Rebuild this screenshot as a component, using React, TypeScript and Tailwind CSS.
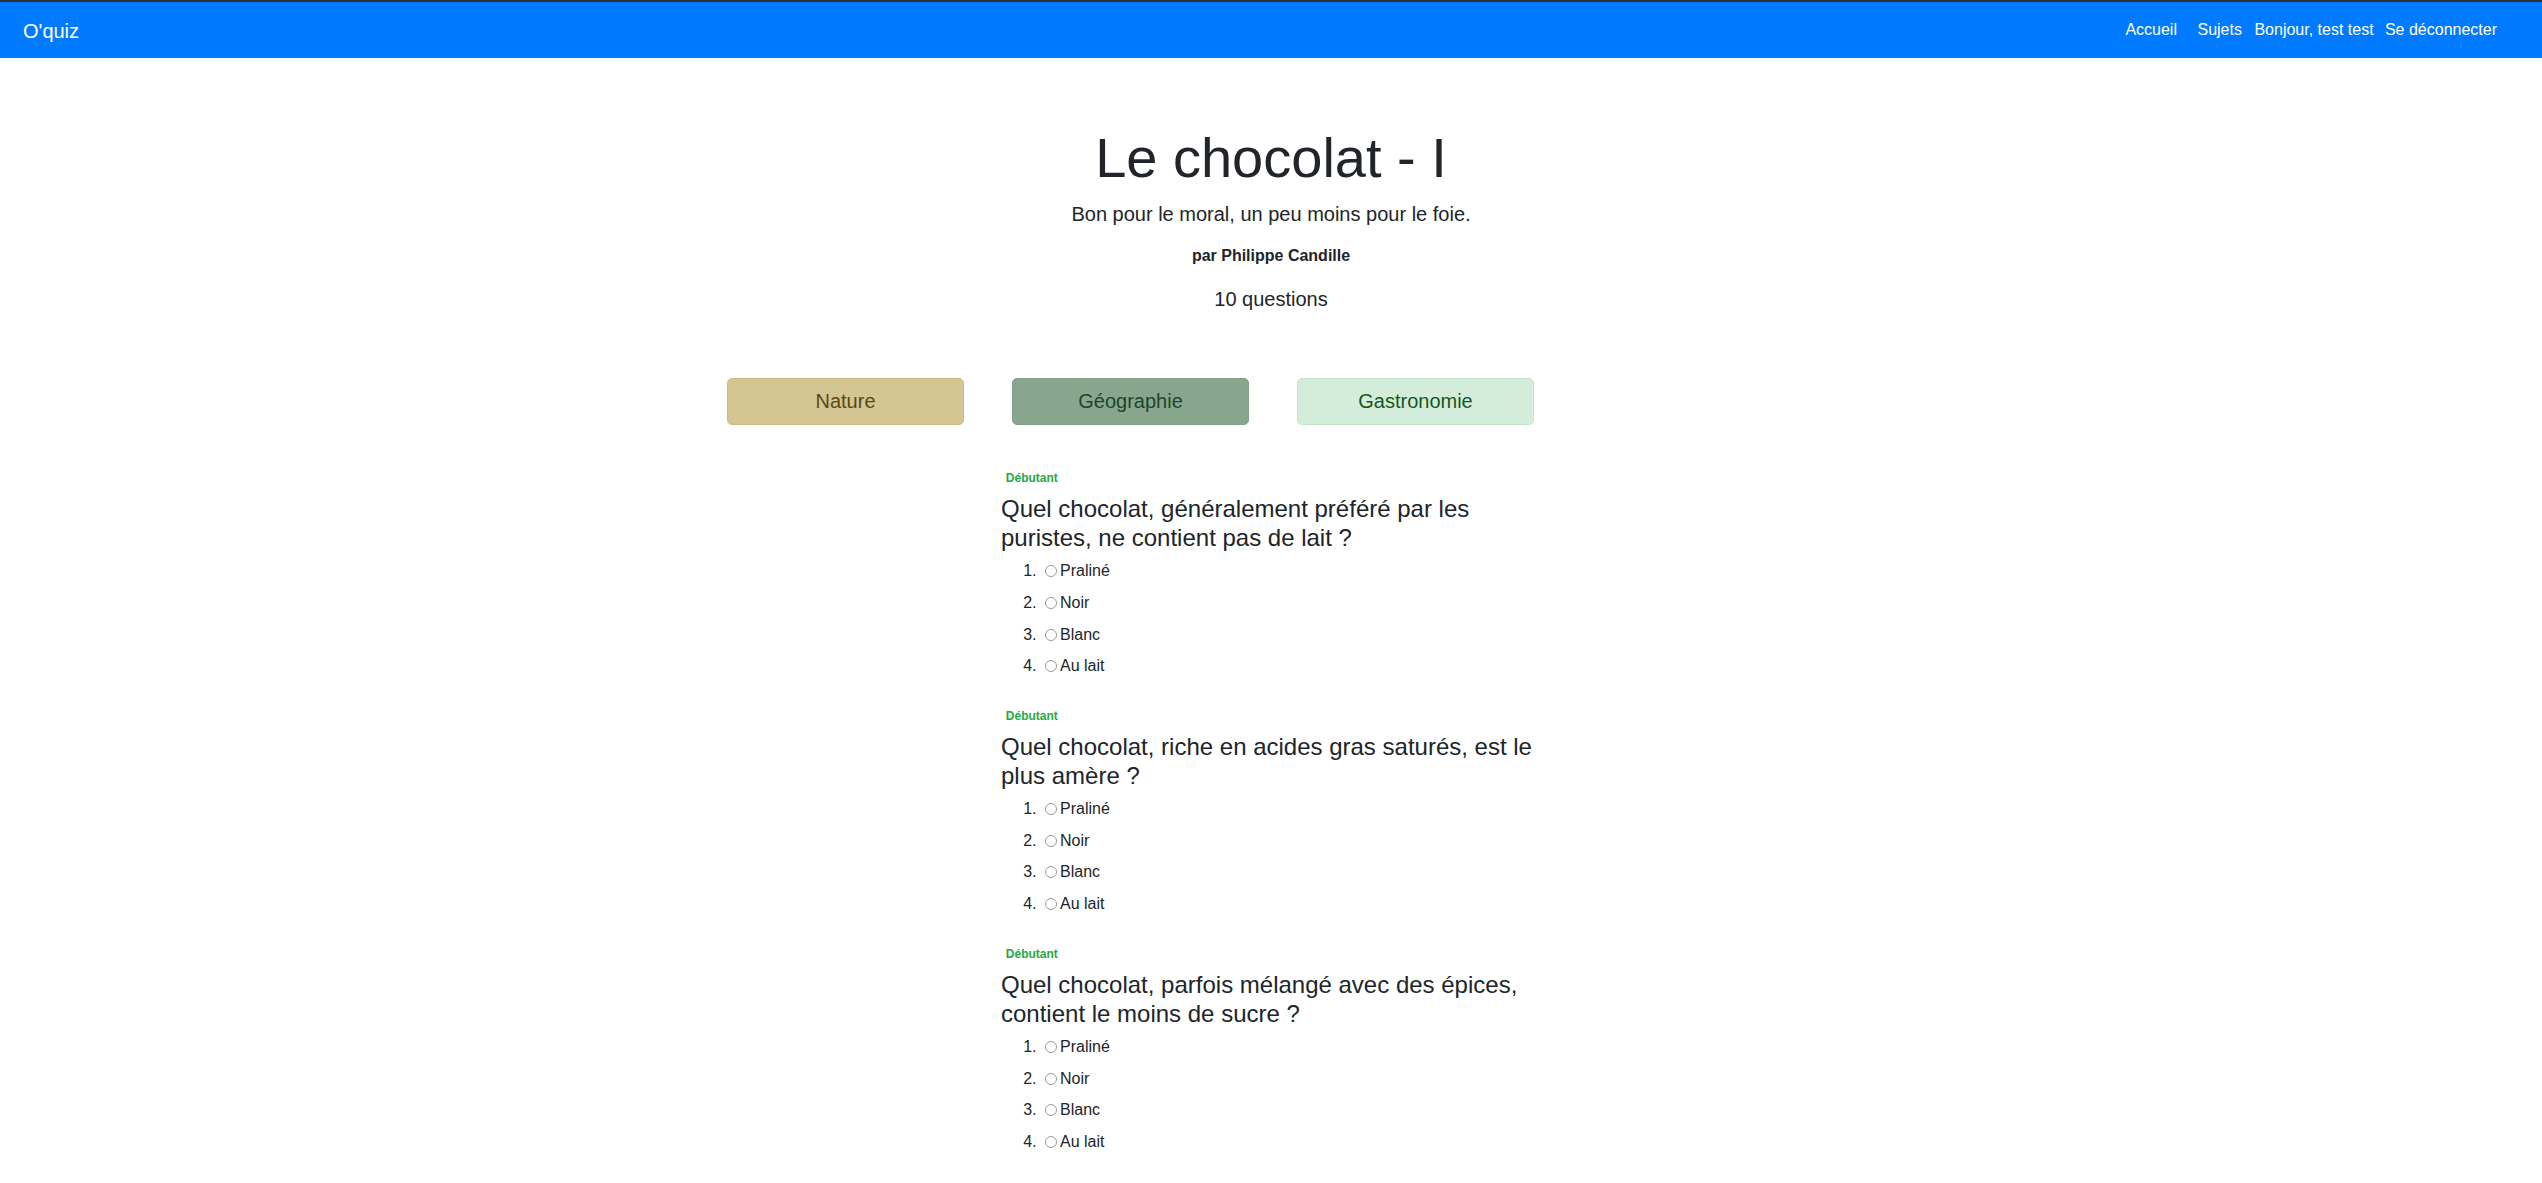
const questions = [
  {
    level: "Débutant",
    title: "Quel chocolat, généralement préféré par les puristes, ne contient pas de lait ?",
  },
  {
    level: "Débutant",
    title: "Quel chocolat, riche en acides gras saturés, est le plus amère ?",
  },
  {
    level: "Débutant",
    title: "Quel chocolat, parfois mélangé avec des épices, contient le moins de sucre ?",
  },
];

const answers = ["Praliné", "Noir", "Blanc", "Au lait"];

export default function App() {
  return (
    <div className="min-h-screen bg-white font-['Liberation_Sans',Arial,sans-serif] text-[#212529]">
      {/* Navbar */}
      <div className="h-[2px] bg-[#2d3036]" />
      <nav className="flex h-[56px] items-center bg-[#007bff] pl-[23px] pr-[45px] text-white shadow-[0_1px_2px_rgba(0,0,0,0.06)]">
        <span className="text-[20px] leading-[30px] pt-[2px]">O'quiz</span>
        <div className="ml-auto flex items-center text-[16px] leading-6">
          <span className="mr-[20.5px]">Accueil</span>
          <span className="mr-[12.5px]">Sujets</span>
          <span className="mr-[11.3px]">Bonjour, test test</span>
          <span>Se déconnecter</span>
        </div>
      </nav>

      {/* Header */}
      <header className="pt-[66px] text-center">
        <h1 className="text-[56px] leading-[1.2] font-light mb-[8px]">Le chocolat - I</h1>
        <p className="text-[20px] leading-[30px] mb-[15px]">
          Bon pour le moral, un peu moins pour le foie.
        </p>
        <p className="text-[16px] leading-6 font-bold mb-[16px]">par Philippe Candille</p>
        <p className="text-[20px] leading-[30px]">10 questions</p>
      </header>

      {/* Tags */}
      <div className="mx-auto mt-[63.6px] flex w-[1140px] gap-[48px] pl-[26px]">
        <div className="flex h-[47px] w-[237px] items-center justify-center rounded-[5px] border border-[#cbbb85] bg-[#d4c593] text-[20px] text-[#5b4812]">
          Nature
        </div>
        <div className="flex h-[47px] w-[237px] items-center justify-center rounded-[5px] border border-[#80a087] bg-[#88a68e] text-[20px] text-[#1d4729]">
          Géographie
        </div>
        <div className="flex h-[47px] w-[237px] items-center justify-center rounded-[5px] border border-[#c3e6cb] bg-[#d4edda] text-[20px] text-[#155724]">
          Gastronomie
        </div>
      </div>

      {/* Questions */}
      <div className="mx-auto mt-[44px] w-[540px]">
        {questions.map((q, i) => (
          <div key={i} className="mb-[20.8px]">
            <div className="px-[4.8px] py-[3px] text-[12px] leading-[12px] font-bold text-[#28a745]">
              {q.level}
            </div>
            <h4 className="mt-[8.2px] mb-[6.6px] text-[24px] leading-[1.2]">{q.title}</h4>
            <ol className="list-decimal pl-[40px] text-[16px]">
              {answers.map((a) => (
                <li key={a} className="h-[31.7px] leading-6">
                  <span className="ml-[4px] mr-[3px] inline-block h-[12px] w-[12px] rounded-full border border-[#9a9a9a] bg-white align-[-1px]" />
                  {a}
                </li>
              ))}
            </ol>
          </div>
        ))}
      </div>
    </div>
  );
}
